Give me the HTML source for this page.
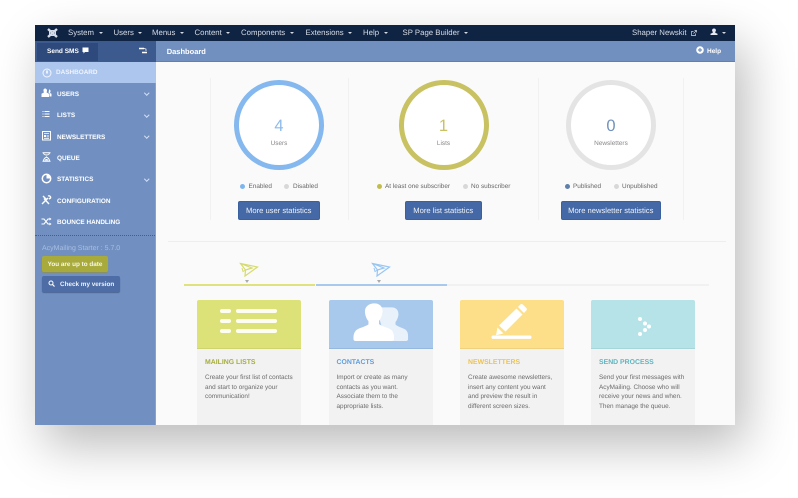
<!DOCTYPE html>
<html><head><meta charset="utf-8"><style>
html,body{margin:0;padding:0;background:#fff}
body{width:798px;height:498px;position:relative;overflow:hidden;font-family:"Liberation Sans",sans-serif;text-rendering:geometricPrecision}
#w{position:absolute;left:35px;top:25px;width:700px;height:400px;box-shadow:10px 20px 46px rgba(0,0,0,.27)}
#c{position:absolute;left:0;top:0;width:798px;height:498px;overflow:hidden;filter:blur(.3px)}
.a{position:absolute;white-space:nowrap}
.t{position:absolute;white-space:nowrap;line-height:10px;height:10px}
.nav{color:#d5dbe6;font-size:7.8px;top:28px}
.nav i,.car{display:inline-block;width:0;height:0;border:2px solid transparent;border-top:2.500px solid #d5dbe6;border-bottom:0;margin-left:4.500px;vertical-align:1.500px}
.m{left:57px;color:#fff;font-size:6.400px;font-weight:bold}
.ch{position:absolute;left:144.500px;width:2.500px;height:2.500px;border-right:1px solid #d5e0f2;border-bottom:1px solid #d5e0f2;transform:rotate(45deg)}
.ring{position:absolute;width:80px;height:80px;top:80px;border-radius:50%;background:#fff;border:5px solid}
.n{position:absolute;text-align:center;width:90px;font-size:16.500px;line-height:18px;top:116.500px}
.l{position:absolute;text-align:center;width:90px;font-size:6.450px;color:#888;top:138.500px;line-height:10px}
.lg{top:182.200px;font-size:6.400px;color:#666}
.d{position:absolute;width:5px;height:5px;border-radius:50%;top:184px}
.b{position:absolute;top:201px;height:19px;line-height:17.500px;box-sizing:border-box;background:#4569a6;border:1px solid #3a609f;border-radius:2px;color:#eef2f8;font-size:7.600px;text-align:center}
.v{position:absolute;top:78px;width:1px;height:142px;background:#f1f1f1}
.h{position:absolute;top:300px;height:48px;width:104px;border-radius:2px 2px 0 0;border-bottom:1px solid}
.cb{position:absolute;top:349px;height:76px;width:104px;background:#f2f2f2}
.ct{top:357.500px;font-size:6.900px;font-weight:bold}
.p{position:absolute;top:373.200px;font-size:6.400px;line-height:9.600px;color:#6a6a6a;white-space:nowrap}
svg{position:absolute;overflow:visible}
</style></head><body>
<div id="w"></div>
<div id="c">
<div class="a" style="left:35px;top:25px;width:700px;height:400px;background:#fafafa"></div>
<div class="a" style="left:35px;top:25px;width:700px;height:16px;background:#0f2342"></div>
<div class="a" style="left:35px;top:41px;width:121px;height:21px;background:#3c5a8e"></div>
<div class="a" style="left:156px;top:41px;width:579px;height:20px;background:#7190c0;border-bottom:1px solid #5d80b8"></div>
<div class="a" style="left:37px;top:43px;width:61px;height:18px;background:#2e4a7c"></div>
<div class="a" style="left:35px;top:62px;width:121px;height:363px;background:#7190c1;box-sizing:border-box;border-right:1px solid #86a2cf"></div>
<div class="a" style="left:35px;top:62px;width:121px;height:21px;background:#adc6ee"></div>

<svg style="left:46px;top:27px" width="13" height="12" viewBox="0 0 13 12"><path d="M2 2l9 8M11 2l-9 8" stroke="#d5dbe6" stroke-width="2.400" fill="none"/><path d="M3.500 3.500h6v5h-6z" fill="none" stroke="#d5dbe6"/></svg>
<div class="t nav" style="left:68px">System<i></i></div>
<div class="t nav" style="left:113.500px">Users<i></i></div>
<div class="t nav" style="left:152px">Menus<i></i></div>
<div class="t nav" style="left:194.500px">Content<i></i></div>
<div class="t nav" style="left:241px">Components<i></i></div>
<div class="t nav" style="left:305.500px">Extensions<i></i></div>
<div class="t nav" style="left:363px">Help<i></i></div>
<div class="t nav" style="left:402.500px">SP Page Builder<i></i></div>
<div class="t nav" style="left:632px">Shaper Newskit</div>
<svg style="left:691px;top:29.500px" width="6" height="6" viewBox="0 0 6 6"><path d="M4.500 3.500v2h-4v-4h2M2.500 3.500l3-3M3.500.5h2v2" stroke="#d5dbe6" stroke-width=".7" fill="none"/></svg>
<svg style="left:710px;top:28px" width="8" height="8" viewBox="0 0 8 8"><path d="M4 .5a1.800 1.800 0 0 1 1.500 3l-.3 1.200 2.300 1v1.300h-7V5.700l2.300-1-.3-1.200A1.800 1.800 0 0 1 4 .5z" fill="#e4e8f0"/></svg>
<span class="car" style="position:absolute;left:722px;top:32px;margin:0"></span>

<div class="t" style="left:47px;top:47px;color:#fff;font-size:6.500px;font-weight:bold">Send SMS</div>
<svg style="left:82px;top:47px" width="7" height="7" viewBox="0 0 7 7"><path d="M.5.500h6v4.500h-3.500l-1.500 1.500v-1.500h-1z" fill="#fff"/></svg>
<svg style="left:138px;top:47px" width="10" height="7" viewBox="0 0 10 7"><path d="M1 1.500h5M4 5.500h5" stroke="#fff" stroke-width="1.500" fill="none"/><path d="M6 1.500l2 .5v2" stroke="#fff" stroke-width=".7" fill="none"/></svg>
<div class="t" style="left:166.700px;top:46.500px;color:#fff;font-size:7.500px;font-weight:bold">Dashboard</div>
<svg style="left:696px;top:46px" width="8" height="8" viewBox="0 0 8 8"><circle cx="4" cy="4" r="3.800" fill="#fff"/><path d="M4 2v4M2 4h4" stroke="#7190c0" stroke-width="1.200"/></svg>
<div class="t" style="left:707px;top:46.800px;color:#fff;font-size:6.500px;font-weight:bold">Help</div>

<svg style="left:42px;top:68px" width="10" height="10" viewBox="0 0 10 10"><circle cx="5" cy="5" r="4" fill="none" stroke="#f2f6fd" stroke-width="1"/><path d="M5 2.500v3" stroke="#f2f6fd" stroke-width="1.800"/></svg>
<div class="t m" style="left:56px;top:68.300px;color:#eef3fc">DASHBOARD</div>
<svg style="left:41px;top:88px" width="11" height="10" viewBox="0 0 11 10"><path d="M4 .5a2 2 0 0 1 2 2.300l-.4 1.700 2.400 1.200v3.300H.5V5.700l2.400-1.200-.4-1.700A2 2 0 0 1 4 .5z" fill="#fff"/><path d="M8 1.500a1.600 1.600 0 0 1 1.500 2L9 5l1.500.8v2.700h-2V5.200L7.500 4.500 8 2.500z" fill="#fff"/></svg>
<div class="t m" style="top:89.900px">USERS</div><div class="ch" style="top:91px"></div>
<svg style="left:42px;top:110px" width="8" height="8" viewBox="0 0 8 8"><path d="M2.500 1.500h5M2.500 4h5M2.500 6.500h5M.5 1.500h1M.5 4h1M.5 6.500h1" stroke="#fff" stroke-width=".9" fill="none"/></svg>
<div class="t m" style="top:111.400px">LISTS</div><div class="ch" style="top:113px"></div>
<svg style="left:42px;top:131px" width="9" height="10" viewBox="0 0 9 10"><path d="M.5.500h8v8.500h-8z" fill="none" stroke="#fff"/><path d="M2 2.500h5M2 7.300h5" stroke="#fff" stroke-width=".8"/><path d="M2 4h2.200v2H2z" fill="#fff"/><path d="M5 4.500h2M5 5.800h2" stroke="#fff" stroke-width=".6"/></svg>
<div class="t m" style="top:132.700px">NEWSLETTERS</div><div class="ch" style="top:134px"></div>
<svg style="left:42px;top:152px" width="9" height="10" viewBox="0 0 9 10"><path d="M.5.700h8M.5 9.300h8M1.500.700c0 3 6 3 6 0M1.500 9.300c0-3.500 2.500-3.500 3-4.300.500.8 3 .8 3 4.300" stroke="#fff" fill="none"/><path d="M2.500 8.500c1-2 3-2 4 0z" fill="#fff"/></svg>
<div class="t m" style="top:154px">QUEUE</div>
<svg style="left:41px;top:173px" width="11" height="11" viewBox="0 0 11 11"><circle cx="5.500" cy="5.500" r="4.200" fill="none" stroke="#fff" stroke-width="1.500"/><path d="M5.500 5.500V1.300a4.200 4.200 0 0 1 4.200 4.200z" fill="#fff"/></svg>
<div class="t m" style="top:175.200px">STATISTICS</div><div class="ch" style="top:177px"></div>
<svg style="left:41px;top:195px" width="11" height="10" viewBox="0 0 11 10"><path d="M1 9l6-6M8 9L3 3.500M2 1l3 3M7 1c1.500-.5 3 .5 2.500 2L8 4" stroke="#fff" stroke-width="1.400" fill="none"/></svg>
<div class="t m" style="top:196.500px">CONFIGURATION</div>
<svg style="left:41px;top:217px" width="11" height="9" viewBox="0 0 11 9"><path d="M.5 2h2.500l4 5h2.500M.5 7h2.500l4-5h2.500" stroke="#fff" stroke-width="1.100" fill="none"/><path d="M8.500.500l2 1.500-2 1.500zM8.500 5.500l2 1.500-2 1.500z" fill="#fff"/></svg>
<div class="t m" style="top:217.900px">BOUNCE HANDLING</div>
<div class="a" style="left:35px;top:235px;width:120px;height:0;border-top:1px dotted #3f5f95"></div>
<div class="t" style="left:42px;top:244px;color:#a9bee2;font-size:7px">AcyMailing Starter : 5.7.0</div>
<div class="a" style="left:42px;top:256px;width:66px;height:16px;background:#a8ab3c;border-radius:2px;box-shadow:0 1px 1px #8b9060;color:#f7f7e6;font-size:6.350px;font-weight:bold;text-align:center;line-height:17px">You are up to date</div>
<div class="a" style="left:42px;top:276px;width:78px;height:16px;background:#4e6da6;border-radius:2px;box-shadow:0 1px 1px #4a6492;color:#eef2f8;font-size:6.350px;font-weight:bold;line-height:17px;text-indent:18px">Check my version</div>
<svg style="left:48px;top:280px" width="7" height="7" viewBox="0 0 7 7"><circle cx="3" cy="3" r="2" fill="none" stroke="#fff" stroke-width="1"/><path d="M4.500 4.500l2 2" stroke="#fff" stroke-width="1.200"/></svg>

<div class="v" style="left:210px"></div><div class="v" style="left:348px"></div><div class="v" style="left:538px"></div><div class="v" style="left:683px"></div>

<div class="ring" style="left:234px;border-color:#85b8ee"></div>
<div class="n" style="left:234px;color:#8dbbea">4</div><div class="l" style="left:234px">Users</div>
<div class="ring" style="left:398.500px;border-color:#c9c263"></div>
<div class="n" style="left:398.500px;color:#c9c263">1</div><div class="l" style="left:398.500px">Lists</div>
<div class="ring" style="left:566px;border-color:#e4e4e4"></div>
<div class="n" style="left:566px;color:#7092bc">0</div><div class="l" style="left:566px">Newsletters</div>

<div class="d" style="left:239.500px;background:#7fb5ee"></div><div class="t lg" style="left:248.500px">Enabled</div>
<div class="d" style="left:284px;background:#d8d8d8"></div><div class="t lg" style="left:293px">Disabled</div>
<div class="d" style="left:376.500px;background:#c2bd4a"></div><div class="t lg" style="left:385px">At least one subscriber</div>
<div class="d" style="left:462.500px;background:#d8d8d8"></div><div class="t lg" style="left:471px">No subscriber</div>
<div class="d" style="left:564.500px;background:#5f80ad"></div><div class="t lg" style="left:573px">Published</div>
<div class="d" style="left:613.500px;background:#d8d8d8"></div><div class="t lg" style="left:622px">Unpublished</div>

<div class="b" style="left:238px;width:81.500px">More user statistics</div>
<div class="b" style="left:405px;width:76.500px">More list statistics</div>
<div class="b" style="left:560.500px;width:100.500px">More newsletter statistics</div>

<div class="a" style="left:168px;top:241px;width:558px;height:1px;background:#eeeeee"></div>

<div class="a" style="left:184px;top:284px;width:131px;height:2px;background:#dfe27e"></div>
<div class="a" style="left:316px;top:284px;width:131px;height:2px;background:#a9c9ec"></div>
<div class="a" style="left:447px;top:284px;width:262px;height:2px;background:#f1f1f1"></div>
<div class="a" style="left:245px;top:280px;width:0;height:0;border:2px solid transparent;border-top:3px solid #aaa;border-bottom:0"></div>
<div class="a" style="left:377px;top:280px;width:0;height:0;border:2px solid transparent;border-top:3px solid #aaa;border-bottom:0"></div>
<svg style="left:240px;top:263px" width="18" height="14" viewBox="0 0 18 14"><path d="M.5.500L17.500 4 5 13 5.500 7zM.5.500L12 5 5.500 7" fill="none" stroke="#d6db6e" stroke-width="1.200"/><path d="M5.500 7L3 8.500 2 5" fill="none" stroke="#d6db6e"/></svg>
<svg style="left:372px;top:263px" width="18" height="14" viewBox="0 0 18 14"><path d="M.5.500L17.500 4 5 13 5.500 7zM.5.500L12 5 5.500 7" fill="none" stroke="#98c6f3" stroke-width="1.200"/><path d="M5.500 7L3 8.500 2 5" fill="none" stroke="#98c6f3"/></svg>

<div class="h" style="left:197px;background:#dde278;border-color:#cfd56c"></div><div class="cb" style="left:197px"></div>
<div class="h" style="left:328.500px;background:#a9c9ec;border-color:#95b8de"></div><div class="cb" style="left:328.500px"></div>
<div class="h" style="left:460px;background:#fddf8a;border-color:#f0d27e"></div><div class="cb" style="left:460px"></div>
<div class="h" style="left:591px;background:#b5e3e8;border-color:#a7d5da"></div><div class="cb" style="left:591px"></div>

<svg style="left:220px;top:309px" width="58" height="25" viewBox="0 0 58 25"><g fill="#fdfdf2"><rect x="0" y="0" width="11" height="4" rx="2"/><rect x="16" y="0" width="41" height="4" rx="2"/><rect x="0" y="10" width="11" height="4" rx="2"/><rect x="16" y="10" width="41" height="4" rx="2"/><rect x="0" y="20" width="11" height="4" rx="2"/><rect x="16" y="20" width="41" height="4" rx="2"/></g></svg>
<svg style="left:353px;top:303px" width="56" height="38" viewBox="0 0 58 44" preserveAspectRatio="none"><path d="M40 5c5 0 7.500 4 7 9-.3 3-1.500 6-3 8v3c2 2 5 3 9 5 2.500 1.300 4 4 4 7.500V42c0 1-1 2-2 2H34L24 5z" fill="#e9f1fb"/><path d="M22 .5c6 0 9.500 4.500 8.500 11-.5 3.500-1.800 7-3.500 9v4c3 2.500 7 3.500 11 5.500 3 1.500 4.500 5 4.500 10V42c0 1-1 2-2 2H2.500c-1 0-2-1-2-2v-2c0-4.500 1.500-8 4.500-9.800 4-2 8-3 11-5.400v-4c-1.800-2-3-5.500-3.500-9C11.500 5 16 .5 22 .5z" fill="#fff"/></svg>
<svg style="left:491px;top:303px" width="41" height="37" viewBox="0 0 41 37"><path d="M8 22.500L25.500 5.500l6 6L14.500 28.500zM27 4l2.300-2.500c.8-.7 1.700-.7 2.500 0l3.500 3.500c.7.8.7 1.700 0 2.500L33 10zM6.500 24.500l6 6-7.500 1.800z" fill="#fff"/><rect x="0.500" y="32.500" width="40" height="3.400" rx="1.700" fill="#fff"/></svg>
<svg style="left:638px;top:317px" width="14" height="20" viewBox="0 0 14 20"><g fill="#fff"><circle cx="2" cy="2" r="2"/><circle cx="7" cy="6.500" r="2"/><circle cx="11" cy="9.500" r="2"/><circle cx="7" cy="13" r="2"/><circle cx="2" cy="17" r="2"/></g></svg>

<div class="t ct" style="left:205px;color:#a6ad3e">MAILING LISTS</div>
<div class="p" style="left:205px">Create your first list of contacts<br>and start to organize your<br>communication!</div>
<div class="t ct" style="left:336.500px;color:#5f9ddc">CONTACTS</div>
<div class="p" style="left:336.500px">Import or create as many<br>contacts as you want.<br>Associate them to the<br>appropriate lists.</div>
<div class="t ct" style="left:468px;color:#eec24c">NEWSLETTERS</div>
<div class="p" style="left:468px">Create awesome newsletters,<br>insert any content you want<br>and preview the result in<br>different screen sizes.</div>
<div class="t ct" style="left:599px;color:#5cb5c0">SEND PROCESS</div>
<div class="p" style="left:599px">Send your first messages with<br>AcyMailing. Choose who will<br>receive your news and when.<br>Then manage the queue.</div>
</div>
</body></html>
